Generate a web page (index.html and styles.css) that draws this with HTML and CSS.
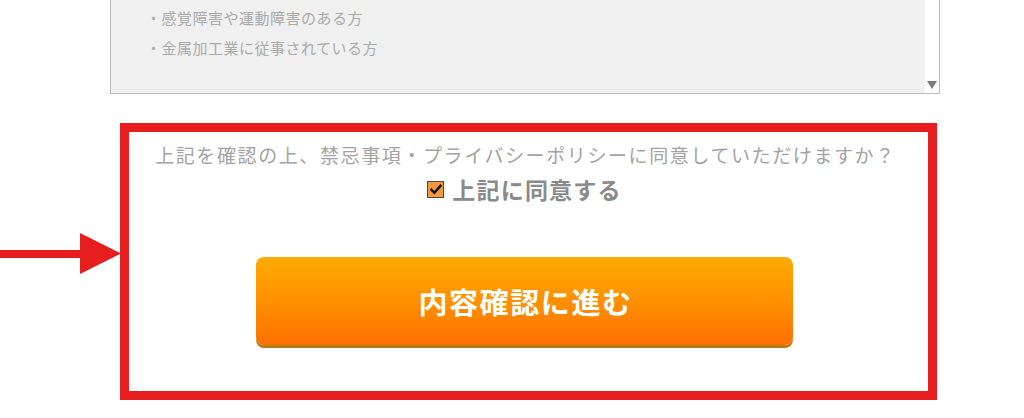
FILE: index.html
```html
<!DOCTYPE html>
<html lang="ja">
<head>
<meta charset="utf-8">
<link rel="stylesheet" href="styles.css">
</head>
<body>
<div class="page">
  <div class="notes">
    <div class="notes-body">
      <p class="note">・感覚障害や運動障害のある方</p>
      <p class="note">・金属加工業に従事されている方</p>
    </div>
    <div class="scrollbar">
      <svg class="scroll-arrow" width="10" height="8" viewBox="0 0 10 8"><path d="M0 0H10L5 8Z" fill="#7a7a7a"/></svg>
    </div>
  </div>

  <div class="agree-box">
    <p class="question">上記を確認の上、禁忌事項・プライバシーポリシーに同意していただけますか？</p>
    <label class="agree">
      <span class="check">
        <svg width="12" height="11" viewBox="0 0 12 11"><path d="M1.5 5.8L4.4 8.8L10.5 1.8" fill="none" stroke="#111" stroke-width="2.4" stroke-linecap="square"/></svg>
      </span>
      <span class="agree-text">上記に同意する</span>
    </label>
    <button class="submit">内容確認に進む</button>
  </div>

  <svg class="pointer" width="122" height="44" viewBox="0 0 122 44">
    <rect x="0" y="17" width="86" height="8" fill="#e61e1e"/>
    <path d="M80 0L121 20.5L80 41Z" fill="#e61e1e"/>
  </svg>
</div>
</body>
</html>
```

FILE: styles.css
```css
* { box-sizing: border-box; }
html, body { margin: 0; padding: 0; background: #fff; }
body { font-family: "Noto Sans CJK JP", "Noto Sans", sans-serif; }
.page { position: relative; width: 1024px; height: 418px; overflow: hidden; }

.notes {
  margin-left: 110px;
  width: 830px;
  height: 94px;
  display: flex;
  border: 1px solid #bdbdbd;
  border-top: none;
}
.notes-body {
  flex: 1;
  background: #f0f0f0;
  padding: 3px 0 0 35px;
}
.note {
  margin: 0;
  font-size: 15px;
  line-height: 30px;
  letter-spacing: 0.5px;
  color: #ababab;
}
.scrollbar {
  width: 15px;
  background: #fff;
  display: flex;
  align-items: flex-end;
  justify-content: center;
  padding-bottom: 4px;
  border-left: 1px solid #f4f4f4;
}

.agree-box {
  margin: 29px 0 0 120px;
  width: 817px;
  height: 277px;
  border: 9px solid #e61e1e;
  padding: 10px 8px 0 0;
  display: flex;
  flex-direction: column;
  align-items: center;
}
.question {
  margin: 0;
  font-size: 19px;
  line-height: 26px;
  letter-spacing: 1.6px;
  color: #a3a3a3;
  padding-left: 2px;
}
.agree {
  margin-top: 6px;
  height: 30px;
  display: flex;
  align-items: center;
  gap: 8px;
}
.check {
  width: 17px;
  height: 17px;
  background: #f5993f;
  border: 1px solid #4a4a4a;
  display: flex;
  align-items: center;
  justify-content: center;
}
.agree-text {
  font-size: 23px;
  font-weight: bold;
  letter-spacing: 1.2px;
  color: #8a8a8a;
}
.submit {
  margin-top: 53px;
  width: 537px;
  height: 88px;
  border: none;
  border-radius: 8px;
  background: linear-gradient(to bottom, #ffac00 0%, #ff9000 50%, #ff7000 100%);
  box-shadow: 0 3px 0 #b97a14;
  color: #fff;
  font-family: "Noto Sans CJK JP", sans-serif;
  font-size: 29px;
  font-weight: bold;
  letter-spacing: 1.6px;
  padding: 0 0 0 2px;
}

.pointer { position: absolute; left: 0; top: 233px; }
```
